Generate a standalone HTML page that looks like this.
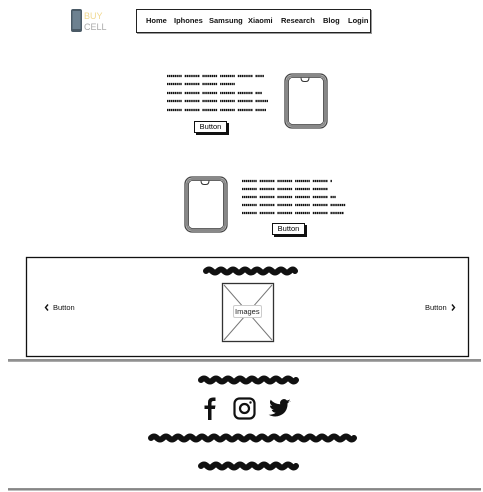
<!DOCTYPE html>
<html><head><meta charset="utf-8"><style>
html,body{margin:0;padding:0;background:#fff;width:483px;height:492px;overflow:hidden;position:relative;font-family:"Liberation Sans",sans-serif}
.a{position:absolute}
.nav{left:136px;top:9px;width:233px;height:22px;border:1.5px solid #222;box-shadow:1px 1px 0 #999}
.nav span{position:absolute;top:6px;font-size:7.5px;font-weight:bold;color:#111}
.btn{position:absolute;border:1.3px solid #111;box-shadow:2px 2px 0 #111;font-size:7.5px;text-align:center;line-height:10px;background:#fff}
.t{font-size:7.5px;color:#111}
</style></head><body>
<svg class="a" style="left:0;top:0" width="483" height="492">
 <rect x="71" y="9" width="11" height="23" rx="2" fill="#4a5a66"/>
 <rect x="72.5" y="11" width="8" height="18" fill="#6d8190"/>
 <text x="84" y="19" font-size="9" fill="#f0d890" font-family="Liberation Sans">BUY</text>
 <text x="84" y="30" font-size="9" fill="#aaa" font-family="Liberation Sans">CELL</text>
 <g stroke="#111" stroke-width="2.2" stroke-dasharray="1.4 0.5 1.4 0.5 1.4 0.5 1.4 0.5 1.4 0.5 1.4 0.5 1.4 0.5 1.4 3" fill="none">
  <line x1="167" y1="76" x2="264" y2="76"/>
  <line x1="167" y1="84" x2="236" y2="84"/>
  <line x1="167" y1="93" x2="262" y2="93"/>
  <line x1="167" y1="101" x2="268" y2="101"/>
  <line x1="167" y1="110" x2="266" y2="110"/>
  <line x1="242" y1="181" x2="332" y2="181"/>
  <line x1="242" y1="189" x2="328" y2="189"/>
  <line x1="242" y1="197" x2="336" y2="197"/>
  <line x1="242" y1="205" x2="346" y2="205"/>
  <line x1="242" y1="213" x2="344" y2="213"/>
 </g>
 <g fill="none">
  <rect x="285" y="74" width="42" height="54" rx="7" stroke="#444" stroke-width="1.3"/>
  <rect x="287" y="76" width="38" height="50" rx="5" stroke="#888" stroke-width="2"/>
  <rect x="288.5" y="77.5" width="35" height="47" rx="4" stroke="#333" stroke-width="0.8"/>
  <path d="M301 77.5 q0 4 3 4 h2 q3 0 3-4" stroke="#333" stroke-width="1"/>
  <rect x="185" y="177" width="42" height="55" rx="7" stroke="#444" stroke-width="1.3"/>
  <rect x="187" y="179" width="38" height="51" rx="5" stroke="#888" stroke-width="2"/>
  <rect x="188.5" y="180.5" width="35" height="48" rx="4" stroke="#333" stroke-width="0.8"/>
  <path d="M201 180.5 q0 4 3 4 h2 q3 0 3-4" stroke="#333" stroke-width="1"/>
 </g>
 <rect x="26.5" y="257.5" width="442" height="99" fill="none" stroke="#111" stroke-width="1.3"/>
 <rect x="222.5" y="283.5" width="51" height="58" fill="none" stroke="#333" stroke-width="1.3"/>
 <path d="M224 285 L272 340 M272 285 L224 340" stroke="#777" stroke-width="1"/>
 <path d="M48 304.5 l-2.5 3 l2.5 3 M452 304.5 l2.5 3 l-2.5 3" stroke="#111" stroke-width="1.4" fill="none"/>
 <line x1="8" y1="360" x2="481" y2="360" stroke="#222" stroke-width="1"/>
 <line x1="8" y1="361.5" x2="481" y2="361.5" stroke="#aaa" stroke-width="1"/>
 <line x1="8" y1="489" x2="481" y2="489" stroke="#222" stroke-width="1"/>
 <line x1="8" y1="490.3" x2="481" y2="490.3" stroke="#aaa" stroke-width="0.8"/>
 <g stroke="#111" stroke-width="6" stroke-linecap="round" fill="none">
  <path d="M206 271 q3 -3 6 0 t6 0 t6 0 t6 0 t6 0 t6 0 t6 0 t6 0 t6 0 t6 0 t6 0 t6 0 t6 0 t6 0 t5 0"/>
  <path d="M201 380 q3 -3 6 0 t6 0 t6 0 t6 0 t6 0 t6 0 t6 0 t6 0 t6 0 t6 0 t6 0 t6 0 t6 0 t6 0 t6 0 t5 0"/>
  <path d="M151 438 q3 -3 6 0 t6 0 t6 0 t6 0 t6 0 t6 0 t6 0 t6 0 t6 0 t6 0 t6 0 t6 0 t6 0 t6 0 t6 0 t6 0 t6 0 t6 0 t6 0 t6 0 t6 0 t6 0 t6 0 t6 0 t6 0 t6 0 t6 0 t6 0 t6 0 t6 0 t6 0 t6 0 t6 0 t5 0"/>
  <path d="M201 466 q3 -3 6 0 t6 0 t6 0 t6 0 t6 0 t6 0 t6 0 t6 0 t6 0 t6 0 t6 0 t6 0 t6 0 t6 0 t6 0 t5 0"/>
 </g>
 <path d="M208 420 v-11 h-3.5 v-3.5 h3.5 v-3 q0 -5 5 -5 h2.5 v3.5 h-2 q-2 0 -2 2 v2.5 h4 l-0.6 3.5 h-3.4 v11 z" fill="#111"/>
 <rect x="234.5" y="398.5" width="20" height="20" rx="5" fill="none" stroke="#111" stroke-width="2.2"/>
 <circle cx="244.5" cy="408.5" r="4.5" fill="none" stroke="#111" stroke-width="2.2"/>
 <circle cx="250.5" cy="402.5" r="1.2" fill="#111"/>
 <path d="M291 401 q-1.5 0.8 -3 0.9 q1.5 -1 2 -2.5 q-1.5 0.9 -3 1.1 q-2.5 -2.6 -5.5 -0.5 q-2 1.7 -1.3 4.2 q-6 -0.3 -9.5 -4.5 q-2 3.5 1.3 6.3 q-1 0 -2 -0.6 q0 3.3 3.6 4.3 q-1 0.4 -2 0.1 q1 2.8 4 3 q-3 2.3 -7 1.8 q4 2.5 9 1.7 q10 -2.5 10 -13 q1.5 -1 2.4 -2.3z" fill="#111"/>
</svg>
<div class="a nav">
 <span style="left:9px">Home</span><span style="left:37px">Iphones</span><span style="left:72px">Samsung</span><span style="left:111px">Xiaomi</span><span style="left:144px">Research</span><span style="left:186px">Blog</span><span style="left:211px">Login</span>
</div>
<div class="btn" style="left:194px;top:121px;width:31px;height:10px">Button</div>
<div class="btn" style="left:272px;top:223px;width:31px;height:10px">Button</div>
<div class="a t" style="left:53px;top:303px">Button</div>
<div class="a t" style="left:425px;top:303px">Button</div>
<div class="a" style="left:233px;top:305px;border:1px solid #ccc;border-radius:2px;background:#fff;font-size:7.5px;padding:1px 1px;line-height:9px;color:#222">Images</div>
</body></html>
